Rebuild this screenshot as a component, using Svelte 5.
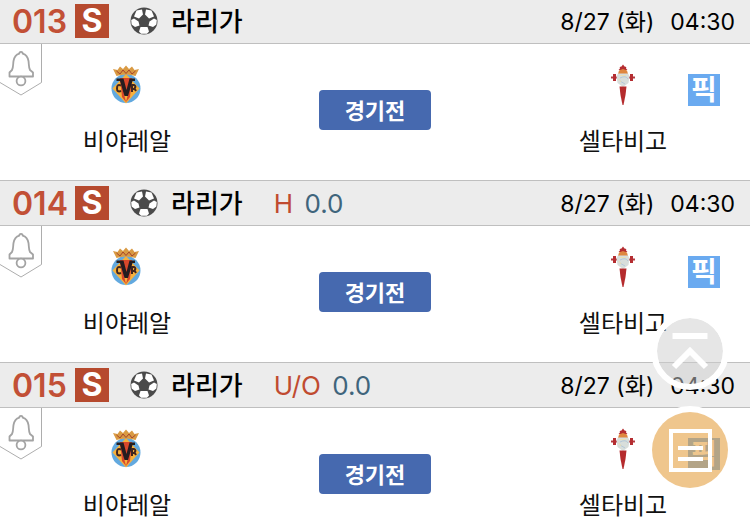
<script>
  const matches = [
    { no: "013", type: "", line: "" },
    { no: "014", type: "H", line: "0.0" },
    { no: "015", type: "U/O", line: "0.0" },
  ].map((match) => ({
    ...match,
    league: "라리가",
    date: "8/27 (화)",
    time: "04:30",
    home: "비야레알",
    away: "셀타비고",
    status: "경기전",
  }));
</script>

<main>
  {#each matches as match (match.no)}
    <article>
      <header>
        <strong class="no">{match.no}</strong>
        <span class="badge">S</span>
        <svg class="ball" viewBox="0 0 28 28" aria-hidden="true">
          <circle cx="14" cy="14" r="13.5" fill="#4a4a4a" />
          <g fill="#fff">
            <path d="M6.500 3.5 12 2.500 13 7.5 9 11.500 4 9.5Z" />
            <path d="M21.500 3.5 16 2.500 15 7.5 19 11.500 24 9.5Z" />
            <path d="M1.2 13 4 11.5 8.5 14.5 9.500 18.500 5 20 1.6 17.5Z" />
            <path d="M26.8 13 24 11.5 19.5 14.5 18.500 18.500 23 20 26.4 17.5Z" />
            <path d="M10.5 20 17.5 20 19 24.5 17 26.8 11 26.8 9 24.5Z" />
          </g>
        </svg>
        <h2>{match.league}</h2>
        {#if match.type}
          <p class="odds"><span>{match.type}</span> {match.line}</p>
        {/if}
        <time><span>{match.date}</span> <span>{match.time}</span></time>
      </header>

      <div class="body">
        <button class="alarm" aria-label="알림">
          <svg viewBox="0 0 42 53" fill="none" aria-hidden="true">
            <path d="M41.5 0V38.5L21 51 0 38.5" stroke="#adadad" />
            <g stroke="#a3a3a3" stroke-width="1.8">
              <path d="M9.5 32.5V28.5L12 26C13.5 23 13 20 13.5 17 14.2 13 16.5 10.5 19.3 9.7 19.3 7.3 22.7 7.3 22.7 9.7 25.5 10.5 27.8 13 28.5 17 29 20 28.5 23 30 26L33 28.5V32.5Z" stroke-linejoin="round" />
              <circle cx="21" cy="37" r="4.4" fill="#fff" />
            </g>
          </svg>
        </button>

        <div class="team">
          <svg viewBox="1 1 40 40" aria-hidden="true">
            <circle cx="20" cy="24.5" r="14.5" fill="#62a9df" />
            <path d="M20 10 33.5 24.5 20 39.5 6.5 24.5Z" fill="#f6b13c" />
            <path d="M14 14h12l-2 19-4 5-4-5Z" fill="#d9472b" />
            <path d="M18 30h4l-2 8Z" fill="#f6b13c" />
            <path d="M10.5 12 7 5 11.5 6 14 2.5 17 5 20 1.5 23 5 26 2.5 28.5 6 33 5 29.5 12Q20 9 10.5 12Z" fill="#d99a43" />
            <path d="M10.5 7 14 10 17 6 20 9.5 23 6 26 10 29.5 7" fill="none" stroke="#a6442b" />
            <path d="M10.5 14.5H17.5L20.5 26 23.5 14.5H29V17H26.5L22 32H18.5L14 17H10.5Z" fill="#241d20" />
            <path d="M15 21.5Q11 19.5 11 24.5 11 28.5 15 27M26 28V21H28Q30.5 22 28.5 24.5L30 27M26 25H28.5" fill="none" stroke="#40251f" stroke-width="2" />
          </svg>
          <span>{match.home}</span>
        </div>

        <button class="status">{match.status}</button>

        <div class="team">
          <svg viewBox="0 1 40 40" aria-hidden="true">
            <path d="M8 13.5H32" stroke="#b23a40" stroke-width="2" />
            <path d="M11.5 10v7M28.5 10v7" stroke="#b52d31" stroke-width="3" />
            <path d="M17 4.5Q16 2.5 18.5 2.5L20 .5 21.5 2.5Q24 2.5 23 4.5L24.5 6H15.5Z" fill="#b52d31" />
            <path d="M15 10 16 6.5 20 5 24 6.5 25 10Z" fill="#df873f" />
            <path d="M15 9.5H25L26.5 12 25.5 19 20 23 14.5 19 13.5 12Z" fill="#d8dedb" />
            <path d="M17 14Q23 11 25 15M17 17l5 3" fill="none" stroke="#b4c8d8" />
            <path d="M17 11.5h6M16 15l2 3" stroke="#eadfb4" />
            <path d="M16.5 22.5H23.5L22.5 31 20.5 41H19.5L17.5 31Z" fill="#b52b2d" />
          </svg>
          <span>{match.away}</span>
        </div>

        <button class="pick">픽</button>
      </div>
    </article>
  {/each}
</main>

<nav>
  <a class="top" href="#app" aria-label="맨 위로">
    <svg viewBox="0 0 66 66" fill="none" stroke="#fff" stroke-width="6" aria-hidden="true">
      <path d="M15.5 18H50.5M17 49 33 33 49 49" />
    </svg>
  </a>
  <button class="slip" aria-label="목록">
    <svg viewBox="0 0 76 76" fill="none" stroke="#fff" stroke-width="4" aria-hidden="true">
      <path d="M19 19H58V58H19Z" />
      <path d="M26 36H51M26 47H51" />
    </svg>
  </button>
</nav>

<style>
  :global(body) {
    margin: 0;
    background: #fff;
  }
  main {
    height: 100vh;
    overflow: hidden;
    color: #111;
    font-family: Inter, "Noto Sans CJK KR", sans-serif;
  }
  button {
    padding: 0;
    border: 0;
    background: none;
    font-family: inherit;
    cursor: pointer;
  }
  svg {
    display: block;
  }
  article:first-child {
    margin-top: -2px;
  }
  header {
    display: flex;
    align-items: center;
    box-sizing: border-box;
    height: 46px;
    padding: 0 15px 0 12px;
    border: solid #bfbfbf;
    border-width: 1px 0;
    background: #ececec;
    color: #000;
    white-space: nowrap;
  }
  .no {
    width: 56px;
    color: #c25036;
    font-size: 32px;
    font-weight: 600;
  }
  .badge {
    width: 34px;
    margin-left: 7px;
    background: #b64a2e;
    color: #fff;
    font-size: 32px;
    font-weight: 700;
    line-height: 34px;
    text-align: center;
  }
  .ball {
    width: 28px;
    height: 28px;
    margin-left: 21px;
  }
  h2 {
    margin: 0 0 0 13px;
    padding-top: 2px;
    font-size: 26px;
    font-weight: 500;
    line-height: 40px;
  }
  .odds {
    margin: 0 0 0 31px;
    color: #3f657c;
    font-size: 26px;
    font-weight: 400;
  }
  .odds span {
    margin-right: 4px;
    color: #c04b30;
  }
  time {
    display: flex;
    gap: 16px;
    margin-left: auto;
    padding-top: 2px;
    font-size: 23px;
    line-height: 40px;
  }
  .body {
    display: grid;
    grid-template-columns: 62px 130fr 366fr 130fr 62px;
    height: 136px;
  }
  .alarm {
    width: 42px;
    height: 53px;
  }
  .team {
    display: flex;
    flex-direction: column;
    align-items: center;
    padding-top: 21px;
    font-size: 24px;
    line-height: 36px;
    white-space: nowrap;
  }
  .team svg {
    width: 40px;
    height: 40px;
    margin-bottom: 19px;
    overflow: visible;
  }
  .status {
    justify-self: center;
    width: 112px;
    height: 40px;
    margin-top: 46px;
    padding-bottom: 3px;
    border-radius: 4px;
    background: #4669af;
    color: #fff;
    font-size: 22px;
    font-weight: 700;
  }
  .pick {
    width: 32px;
    height: 32px;
    margin-top: 30px;
    background: #6aaaf0;
    color: #fff;
    font-size: 28px;
    font-weight: 700;
    line-height: 32px;
  }
  nav {
    position: fixed;
    right: 21px;
    bottom: 44px;
    display: flex;
    flex-direction: column;
    align-items: center;
    gap: 22px;
  }
  .top {
    border: 6px solid #fff;
    border-radius: 50%;
    background: rgba(205, 205, 205, 0.5);
    background-clip: padding-box;
  }
  .top svg {
    width: 66px;
    height: 66px;
  }
  .slip {
    border-radius: 50%;
    background: rgba(228, 160, 65, 0.6);
    box-shadow: 0 0 0 6px #fff;
  }
  .slip svg {
    width: 76px;
    height: 76px;
  }
</style>
